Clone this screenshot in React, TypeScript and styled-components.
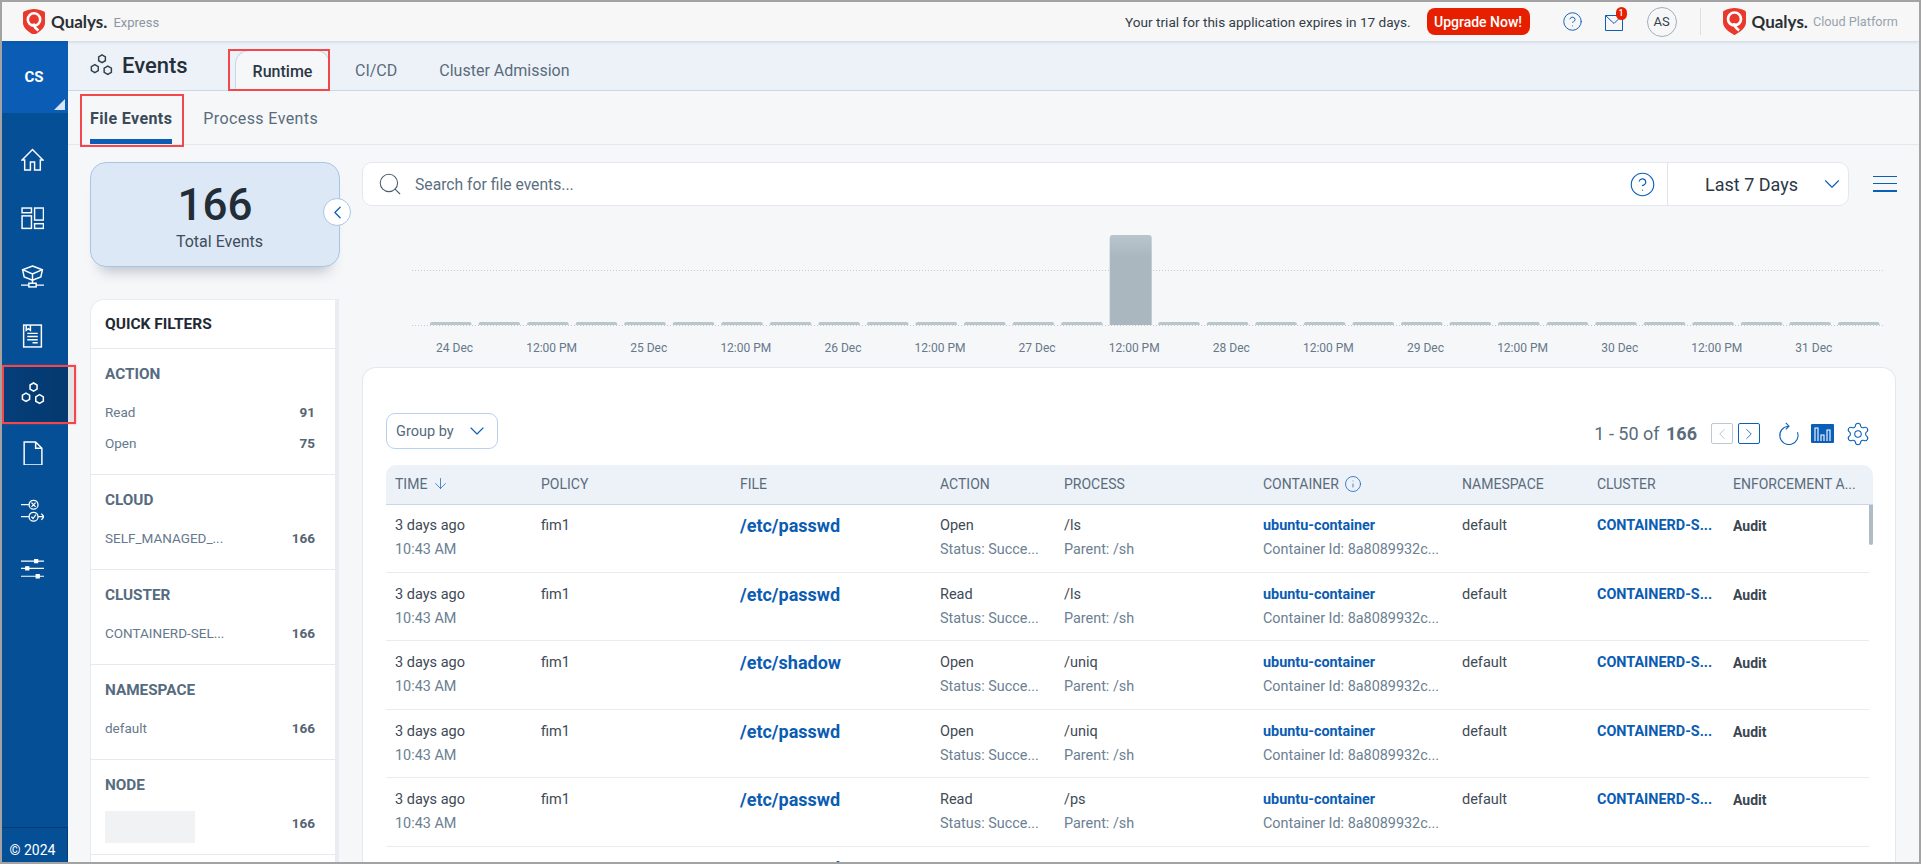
import React from "react";
import styled, { createGlobalStyle } from "styled-components";
import { ChevronDown, ChevronLeft, ChevronRight, CircleHelp, Info, ArrowDown, Search, Settings } from "lucide-react";

const filterGroups = [
  { title: "ACTION", items: [{ label: "Read", count: 91 }, { label: "Open", count: 75 }] },
  { title: "CLOUD", items: [{ label: "SELF_MANAGED_...", count: 166 }] },
  { title: "CLUSTER", items: [{ label: "CONTAINERD-SEL...", count: 166 }] },
  { title: "NAMESPACE", items: [{ label: "default", count: 166 }] },
];

const chartLabels = [
  "24 Dec", "12:00 PM", "25 Dec", "12:00 PM", "26 Dec", "12:00 PM", "27 Dec", "12:00 PM",
  "28 Dec", "12:00 PM", "29 Dec", "12:00 PM", "30 Dec", "12:00 PM", "31 Dec",
];

const rows = [
  { file: "/etc/passwd", action: "Open", process: "/ls" },
  { file: "/etc/passwd", action: "Read", process: "/ls" },
  { file: "/etc/shadow", action: "Open", process: "/uniq" },
  { file: "/etc/passwd", action: "Open", process: "/uniq" },
  { file: "/etc/passwd", action: "Read", process: "/ps" },
  { file: "/etc/passwd", action: "Open", process: "/ps" },
];

const columns = ["POLICY", "FILE", "ACTION", "PROCESS"];

function Shield({ size }: { size: number }) {
  return (
    <svg width={size} height={size * 1.18} viewBox="0 0 22 26">
      <path d="M11 0C14 0 18 1 21 2.6C21.8 3 22 3.6 22 4.4V14C22 19 16 23.6 11 26C6 23.6 0 19 0 14V4.4C0 3.6 .2 3 1 2.6C4 1 8 0 11 0Z" fill="#e8392c" />
      <circle cx="11" cy="10.5" r="6.2" fill="none" stroke="#fff" strokeWidth="2.6" />
      <path d="M10.5 14.5C11 18 13 20 15.5 21.5" fill="none" stroke="#fff" strokeWidth="2.6" />
    </svg>
  );
}

function Hexagons({ color, size }: { color: string; size: number }) {
  const hex = (x: number, y: number, r: number) =>
    [0, 1, 2, 3, 4, 5]
      .map((i) => {
        const a = (Math.PI / 3) * i + Math.PI / 6;
        return `${x + r * Math.cos(a)},${y + r * Math.sin(a)}`;
      })
      .join(" ");
  return (
    <svg width={size} height={size} viewBox="0 0 22 22" fill="none" stroke={color} strokeWidth="1.4">
      <polygon points={hex(11.5, 4.6, 3.7)} />
      <polygon points={hex(4.6, 14, 3.8)} />
      <polygon points={hex(17, 15.6, 4)} />
    </svg>
  );
}

const navIcons = [
  <path key="home" d="M1 11.5L11 1.5L21 11.5H18.5V21H13V13.5H9V21H3.5V11.5Z" />,
  <g key="widgets">
    <rect x="1" y="1" width="9" height="4.5" />
    <rect x="1" y="8.5" width="9" height="12" />
    <rect x="13" y="1" width="8.5" height="11.5" />
    <rect x="13" y="16" width="8.5" height="4.5" />
  </g>,
  <g key="network">
    <path d="M11 1L20.5 4.5L19 11.5L11 14.5L3 11.5L1.5 4.5Z" />
    <path d="M1.5 4.5L11 8.5L20.5 4.5M11 8.5V17.5" />
    <rect x="7.5" y="17.5" width="7" height="3.5" />
    <path d="M0 19.3H7.5M14.5 19.3H22" />
  </g>,
  <g key="doc">
    <rect x="2.5" y="1" width="17" height="21" />
    <path d="M5 1V6L7 4.5L9 6V1" />
    <path d="M6 9H16M6 12H16M6 15H16M11 18H16" />
  </g>,
  <g key="events" />,
  <path key="file" d="M3 1H14L20 7V23H3ZM14 1V7H20" />,
  <g key="route" strokeWidth="1.2">
    <path d="M0 5.5H8M0 17H8M16.500 17H22M19.500 14L22 17L19.500 20" />
    <circle cx="12" cy="5.500" r="4.300" />
    <circle cx="12" cy="17" r="4.300" />
    <path d="M10 3.500L14 7.500M14 3.500L10 7.500M10 17L11.500 18.700L14.300 15" />
  </g>,
  <g key="sliders" strokeWidth="1.1">
    <path d="M0 3H22M0 10H22M0 17.500H22" />
    <path d="M13 1.500H16V4.500H13ZM4.500 8.500H7.500V11.500H4.500ZM14.500 16H17.500V19H14.500Z" fill="#fff" />
  </g>,
];

function App() {
  return (
    <>
      <GlobalStyle />
      <Frame>
        <TopBar>
          <Brand>
            <Shield size={22} />
            <Wordmark>Qualys.</Wordmark>
            <BrandSub>Express</BrandSub>
          </Brand>
          <TopRight>
            <TrialText>Your trial for this application expires in 17 days.</TrialText>
            <UpgradeButton>Upgrade Now!</UpgradeButton>
            <TopHelp>
              <CircleHelp size={21} strokeWidth={1.1} color="#0b5fb8" />
            </TopHelp>
            <MailIcon>
              <svg width="18" height="16" viewBox="0 0 18 16" fill="none" stroke="#0b5fb8" strokeWidth="1">
                <path d="M.5 .5H17.500V15.500H.5ZM.5 .5L9 8.500L13.500 4" />
              </svg>
              <MailBadge>1</MailBadge>
            </MailIcon>
            <Avatar>AS</Avatar>
            <TopDivider />
            <Shield size={23} />
            <Wordmark>Qualys.</Wordmark>
            <CloudSub>Cloud Platform</CloudSub>
          </TopRight>
        </TopBar>
        <Body>
          <Sidebar>
            <OrgBlock>
              CS
              <OrgCorner />
            </OrgBlock>
            <Nav>
              {navIcons.map((icon, i) => (
                <NavItem key={i} $active={i === 4}>
                  {i === 4 ? (
                    <Hexagons color="#fff" size={24} />
                  ) : (
                    <svg width="23" height="24" viewBox="0 0 22 23" fill="none" stroke="#fff" strokeWidth="1.4">
                      {icon}
                    </svg>
                  )}
                  {i === 4 && <SideHighlight />}
                </NavItem>
              ))}
            </Nav>
            <SideFooter>© 2024</SideFooter>
          </Sidebar>
          <Main>
            <TabBar>
              <PageTitle>
                <Hexagons color="#33414e" size={23} />
                <span>Events</span>
              </PageTitle>
              <ActiveTab>
                Runtime
                <TabHighlight />
              </ActiveTab>
              <Tab>CI/CD</Tab>
              <Tab>Cluster Admission</Tab>
            </TabBar>
            <SubTabs>
              <SubTab $active>
                File Events
                <SubTabHighlight />
              </SubTab>
              <SubTab>Process Events</SubTab>
            </SubTabs>
            <Content>
              <LeftColumn>
                <TotalCard>
                  <TotalNumber>166</TotalNumber>
                  <TotalLabel>Total Events</TotalLabel>
                  <CollapseButton>
                    <ChevronLeft size={21} strokeWidth={1.5} color="#0b5fb8" />
                  </CollapseButton>
                </TotalCard>
                <FilterPanel>
                  <FilterHeading>QUICK FILTERS</FilterHeading>
                  {filterGroups.map((group) => (
                    <FilterGroup key={group.title}>
                      <FilterTitle>{group.title}</FilterTitle>
                      {group.items.map((item) => (
                        <FilterItem key={item.label}>
                          <span>{item.label}</span>
                          <FilterCount>{item.count}</FilterCount>
                        </FilterItem>
                      ))}
                    </FilterGroup>
                  ))}
                  <FilterGroup>
                    <FilterTitle>NODE</FilterTitle>
                    <FilterItem>
                      <RedactedName />
                      <FilterCount>166</FilterCount>
                    </FilterItem>
                  </FilterGroup>
                  <ScrollThumb />
                </FilterPanel>
              </LeftColumn>
              <RightColumn>
                <SearchRow>
                  <SearchBox>
                    <SearchField>
                      <Search size={26} strokeWidth={1} color="#4c5f70" />
                      <SearchText>Search for file events...</SearchText>
                      <CircleHelp size={27} strokeWidth={1} color="#0b5fb8" />
                    </SearchField>
                    <DateSelect>
                      <span>Last 7 Days</span>
                      <ChevronDown size={26} strokeWidth={1} color="#0b5fb8" />
                    </DateSelect>
                  </SearchBox>
                  <Hamburger>
                    <i />
                    <i />
                    <i />
                  </Hamburger>
                </SearchRow>
                <Chart>
                  <svg width="1535" height="125" viewBox="0 0 1535 125">
                    <defs>
                      <linearGradient id="tall" x1="0" y1="0" x2="0" y2="1">
                        <stop offset="0" stopColor="#b8c5cd" />
                        <stop offset="0.25" stopColor="#aab7bf" />
                        <stop offset="1" stopColor="#aab7bf" />
                      </linearGradient>
                    </defs>
                    <line x1="50" x2="1522" y1="64.5" y2="64.5" stroke="#c4cad0" strokeDasharray="1 2" />
                    <line x1="50" x2="1522" y1="119.500" y2="119.500" stroke="#c4cad0" strokeDasharray="1 2" />
                    {Array.from({ length: 30 }).map((_, i) =>
                      i === 14 ? (
                        <path key={i} d={`M${68 + i * 48.55} 119V32a3 3 0 0 1 3-3h36a3 3 0 0 1 3 3V119Z`} fill="url(#tall)" />
                      ) : (
                        <path key={i} d={`M${68 + i * 48.55} 119V118a2 2 0 0 1 2-2h37.500a2 2 0 0 1 2 2V119Z`} fill="#b9c7c8" />
                      ),
                    )}
                  </svg>
                  <ChartAxis>
                    {chartLabels.map((label, i) => (
                      <ChartLabel key={i}>{label}</ChartLabel>
                    ))}
                  </ChartAxis>
                </Chart>
                <TableCard>
                  <Toolbar>
                    <GroupBy>
                      Group by
                      <ChevronDown size={24} strokeWidth={1.1} color="#0b5fb8" />
                    </GroupBy>
                    <Pagination>
                      <PageInfo>
                        1 - 50 of <b>166</b>
                      </PageInfo>
                      <PageButton $disabled>
                        <ChevronLeft size={18} strokeWidth={1} color="#a8b4bd" />
                      </PageButton>
                      <PageButton>
                        <ChevronRight size={18} strokeWidth={1.1} color="#0b5fb8" />
                      </PageButton>
                      <RefreshIcon viewBox="0 0 24 26" fill="none" stroke="#0b5fb8" strokeWidth="1.2">
                        <path d="M21.3 11.500A10 10 0 1 1 11 5.050" />
                        <path d="M8.500 1.500L12 5L8.500 8.500" />
                      </RefreshIcon>
                      <ChartToggle>
                        <svg width="17" height="14" viewBox="0 0 17 14" fill="none" stroke="#fff" strokeWidth="1.1">
                          <path d="M1 14V1H4V14M7 14V8H10V14M13 14V3H16V14" />
                        </svg>
                      </ChartToggle>
                      <Settings size={26} strokeWidth={1} color="#0b5fb8" />
                    </Pagination>
                  </Toolbar>
                  <TableHead>
                    <HeadCell>
                      TIME <ArrowDown size={17} strokeWidth={1} color="#0b5fb8" />
                    </HeadCell>
                    {columns.map((c) => (
                      <HeadCell key={c}>{c}</HeadCell>
                    ))}
                    <HeadCell>
                      CONTAINER <Info size={18} strokeWidth={1} color="#0b5fb8" />
                    </HeadCell>
                    <HeadCell>NAMESPACE</HeadCell>
                    <HeadCell>CLUSTER</HeadCell>
                    <HeadCell>ENFORCEMENT A...</HeadCell>
                  </TableHead>
                  <TableBody>
                    {rows.map((row, i) => (
                      <Row key={i}>
                        <Cell>
                          <Primary>3 days ago</Primary>
                          <Secondary>10:43 AM</Secondary>
                        </Cell>
                        <Cell>
                          <Primary>fim1</Primary>
                        </Cell>
                        <Cell>
                          <FileLink>{row.file}</FileLink>
                        </Cell>
                        <Cell>
                          <Primary>{row.action}</Primary>
                          <Secondary>Status: Succe...</Secondary>
                        </Cell>
                        <Cell>
                          <Primary>{row.process}</Primary>
                          <Secondary>Parent: /sh</Secondary>
                        </Cell>
                        <Cell>
                          <BlueStrong>ubuntu-container</BlueStrong>
                          <Secondary>Container Id: 8a8089932c...</Secondary>
                        </Cell>
                        <Cell>
                          <Primary>default</Primary>
                        </Cell>
                        <Cell>
                          <BlueStrong>CONTAINERD-S...</BlueStrong>
                        </Cell>
                        <Cell>
                          <AuditText>Audit</AuditText>
                        </Cell>
                      </Row>
                    ))}
                    <TableThumb />
                  </TableBody>
                </TableCard>
              </RightColumn>
            </Content>
          </Main>
        </Body>
      </Frame>
    </>
  );
}

const GlobalStyle = createGlobalStyle`
  html, body {
    margin: 0;
    padding: 0;
    background: #fff;
    font-family: Roboto, "Liberation Sans", sans-serif;
  }
  * {
    box-sizing: border-box;
  }
`;

const Frame = styled.div`
  width: 1921px;
  height: 864px;
  border: 2px solid #a3a3a3;
  display: flex;
  flex-direction: column;
  overflow: hidden;
  background: #f6f7f9;
`;

const TopBar = styled.header`
  height: 39px;
  flex: none;
  display: flex;
  align-items: center;
  justify-content: space-between;
  padding: 0 21px;
  background: #f7f7f7;
  box-shadow: 0 1px 3px rgba(40, 70, 110, 0.18);
  position: relative;
  z-index: 3;
`;

const Brand = styled.div`
  display: flex;
  align-items: center;
`;

const Wordmark = styled.span`
  margin-left: 6px;
  font-family: Lato, sans-serif;
  font-weight: 700;
  font-size: 17px;
  color: #2b2f33;
`;

const BrandSub = styled.span`
  margin-left: 6px;
  font-size: 13px;
  color: #8b96a3;
  padding-top: 2px;
`;

const TopRight = styled.div`
  display: flex;
  align-items: center;
`;

const TrialText = styled.span`
  font-size: 13.6px;
  color: #333d47;
`;

const UpgradeButton = styled.button`
  margin-left: 16px;
  width: 103px;
  height: 27px;
  border: none;
  border-radius: 8px;
  background: #e61f00;
  color: #fff;
  font: 500 14px Roboto, sans-serif;
`;

const TopHelp = styled.span`
  display: flex;
  margin-left: 32px;
`;

const MailIcon = styled.span`
  display: flex;
  position: relative;
  margin-left: 22px;
  margin-top: 3px;
`;

const MailBadge = styled.span`
  position: absolute;
  right: -4px;
  top: -8px;
  width: 11px;
  height: 13px;
  border-radius: 6px;
  background: #e61f00;
  color: #fff;
  font-size: 9px;
  font-weight: 500;
  line-height: 13px;
  text-align: center;
`;

const Avatar = styled.span`
  margin-left: 24px;
  width: 30px;
  height: 30px;
  border-radius: 50%;
  border: 1px solid #9fb0c0;
  display: flex;
  align-items: center;
  justify-content: center;
  font-size: 13px;
  color: #33414e;
`;

const TopDivider = styled.span`
  margin: 0 22px 0 23px;
  width: 1px;
  height: 27px;
  background: #dcdfe3;
`;

const CloudSub = styled.span`
  margin-left: 5px;
  font-size: 12.7px;
  color: #98a3ad;
`;

const Body = styled.div`
  flex: 1;
  min-height: 0;
  display: flex;
`;

const Sidebar = styled.aside`
  width: 66px;
  flex: none;
  display: flex;
  flex-direction: column;
  background: #054f96;
  position: relative;
  z-index: 2;
`;

const OrgBlock = styled.div`
  height: 72px;
  flex: none;
  position: relative;
  display: flex;
  align-items: center;
  justify-content: center;
  background: #0a5cb5;
  color: #fff;
  font-size: 15px;
  font-weight: 700;
  padding-right: 2px;
`;

const OrgCorner = styled.span`
  position: absolute;
  right: 3px;
  bottom: 3px;
  width: 0;
  height: 0;
  border-left: 11px solid transparent;
  border-bottom: 11px solid #d6e4f3;
`;

const Nav = styled.nav`
  padding-top: 18px;
  display: flex;
  flex-direction: column;
`;

const NavItem = styled.div<{ $active?: boolean }>`
  height: 58.5px;
  position: relative;
  display: flex;
  align-items: center;
  justify-content: center;
  padding-right: 5px;
  background: ${(p) => (p.$active ? "linear-gradient(90deg, #053e7a, #05396f)" : "transparent")};
`;

const SideHighlight = styled.span`
  position: absolute;
  inset: 0 -8px 0 0;
  border: 2px solid #f2484c;
  box-shadow: 0 0 2px rgba(242, 72, 76, 0.4);
  background: linear-gradient(90deg, transparent 64px, rgba(0, 0, 0, 0.08) 64px);
`;

const SideFooter = styled.footer`
  margin-top: auto;
  height: 35px;
  border-top: 1px solid #053c75;
  border-right: 1px solid #053c75;
  display: flex;
  align-items: center;
  justify-content: center;
  padding: 9px 4px 0 0;
  color: #fff;
  font-size: 14px;
`;

const Main = styled.main`
  flex: 1;
  min-width: 0;
  display: flex;
  flex-direction: column;
`;

const TabBar = styled.div`
  height: 50px;
  flex: none;
  display: flex;
  align-items: flex-end;
  padding-left: 22px;
  background: #edf2f9;
  border-bottom: 1px solid #c9d8e8;
`;

const PageTitle = styled.div`
  width: 145px;
  height: 100%;
  display: flex;
  align-items: center;
  gap: 9px;
  font-size: 22px;
  font-weight: 500;
  color: #25303a;
`;

const ActiveTab = styled.div`
  position: relative;
  height: 41px;
  width: 95px;
  margin-bottom: -1px;
  display: flex;
  align-items: center;
  justify-content: center;
  background: #f6f7f9;
  border: 1px solid #c9d8e8;
  border-bottom: none;
  border-radius: 14px 14px 0 0;
  font-size: 16px;
  font-weight: 500;
  color: #2c3844;
`;

const TabHighlight = styled.span`
  position: absolute;
  inset: -2px -1px 0 -8px;
  border: 2px solid #f2484c;
`;

const Tab = styled.div`
  height: 40px;
  padding: 0 17px 0 25px;
  display: flex;
  align-items: center;
  font-size: 16px;
  color: #5a6c7c;
`;

const SubTabs = styled.div`
  height: 54px;
  flex: none;
  display: flex;
  gap: 31px;
  padding-left: 22px;
  border-bottom: 1px solid #e4e8ec;
`;

const SubTab = styled.div<{ $active?: boolean }>`
  position: relative;
  height: 53px;
  padding-top: 18px;
  font-size: 16px;
  letter-spacing: 0.4px;
  line-height: 20px;
  font-weight: ${(p) => (p.$active ? 700 : 400)};
  color: ${(p) => (p.$active ? "#3a4a59" : "#5a6c7c")};
  border-bottom: 5px solid ${(p) => (p.$active ? "#0a5cb5" : "transparent")};
`;

const SubTabHighlight = styled.span`
  position: absolute;
  inset: 3px -12px -8px -10px;
  border: 2px solid #f2484c;
`;

const Content = styled.div`
  flex: 1;
  min-height: 0;
  display: flex;
  gap: 22px;
  padding: 17px 22px 0;
`;

const LeftColumn = styled.div`
  width: 250px;
  flex: none;
  display: flex;
  flex-direction: column;
`;

const TotalCard = styled.div`
  height: 105px;
  flex: none;
  position: relative;
  display: flex;
  flex-direction: column;
  align-items: center;
  border: 1px solid #a9c5e4;
  border-radius: 16px;
  background: #dce8f5;
  box-shadow: 0 14px 14px -10px rgba(30, 50, 70, 0.28);
`;

const TotalNumber = styled.div`
  margin-top: 16px;
  font-size: 44px;
  line-height: 52px;
  font-weight: 500;
  color: #232d37;
`;

const TotalLabel = styled.div`
  margin: 1px 0 0 9px;
  font-size: 16px;
  line-height: 20px;
  color: #3f4d5b;
`;

const CollapseButton = styled.span`
  position: absolute;
  right: -12px;
  top: 35px;
  width: 28px;
  height: 28px;
  display: flex;
  align-items: center;
  justify-content: center;
  border-radius: 50%;
  background: #fff;
  border: 1px solid #a9c5e4;
`;

const FilterPanel = styled.div`
  margin-top: 32px;
  flex: 1;
  min-height: 0;
  width: 249px;
  position: relative;
  overflow: hidden;
  background: #fff;
  border-left: 1px solid #e6eaee;
  border-right: 4px solid #e9edf1;
  border-top: 1px solid #e9edf1;
  border-top-left-radius: 14px;
`;

const ScrollThumb = styled.span`
  position: absolute;
  right: -4px;
  top: 0;
  width: 4px;
  height: 404px;
  background: #afbcc6;
  border-top-right-radius: 2px;
`;

const FilterHeading = styled.div`
  height: 49px;
  display: flex;
  align-items: center;
  padding-left: 14px;
  padding-bottom: 1px;
  border-bottom: 1px solid #e6eaee;
  font-size: 15.5px;
  font-weight: 700;
  color: #1f2a35;
`;

const FilterGroup = styled.section`
  padding: 16px 20px 16px 14px;
  border-bottom: 1px solid #e6eaee;
`;

const FilterTitle = styled.div`
  margin-bottom: 13px;
  font-size: 15.3px;
  line-height: 18px;
  font-weight: 700;
  color: #566b80;
`;

const FilterItem = styled.div`
  height: 31px;
  display: flex;
  align-items: center;
  justify-content: space-between;
  font-size: 13.5px;
  color: #65798c;
`;

const FilterCount = styled.b`
  font-size: 13.5px;
  font-weight: 700;
  color: #566474;
`;

const RedactedName = styled.span`
  width: 90px;
  height: 32px;
  margin: 4px 0 -5px;
  background: #f1f2f4;
`;

const RightColumn = styled.div`
  flex: 1;
  min-width: 0;
  display: flex;
  flex-direction: column;
`;

const SearchRow = styled.div`
  height: 44px;
  flex: none;
  display: flex;
  align-items: center;
  gap: 24px;
`;

const SearchBox = styled.div`
  flex: 1;
  height: 100%;
  display: flex;
  background: #fff;
  border: 1px solid #e4e8ee;
  border-radius: 10px;
`;

const SearchField = styled.div`
  flex: 1;
  display: flex;
  align-items: center;
  padding: 0 11px 0 14px;
`;

const SearchText = styled.span`
  flex: 1;
  margin-left: 12px;
  font-size: 15.7px;
  color: #5c6f80;
`;

const DateSelect = styled.div`
  width: 181px;
  flex: none;
  display: flex;
  align-items: center;
  justify-content: space-between;
  padding: 0 3px 0 37px;
  border-left: 1px solid #e0e5ea;
  font-size: 18px;
  color: #2c3844;
`;

const Hamburger = styled.div`
  width: 24px;
  display: flex;
  flex-direction: column;
  gap: 6px;
  i {
    display: block;
    height: 1px;
    background: #0b5fb8;
  }
  i:last-child {
    height: 2px;
  }
`;

const Chart = styled.div`
  height: 161px;
  flex: none;
  svg {
    display: block;
  }
`;

const ChartAxis = styled.div`
  height: 34px;
  display: flex;
  padding-left: 44px;
`;

const ChartLabel = styled.span`
  width: 97.1px;
  flex: none;
  text-align: center;
  font-size: 12px;
  line-height: 34px;
  color: #66788a;
`;

const TableCard = styled.div`
  flex: 1;
  min-height: 0;
  margin-right: 1px;
  padding: 45px 22px 0 23px;
  overflow: hidden;
  background: #fff;
  border: 1px solid #e4e8ee;
  border-bottom: none;
  border-radius: 14px 14px 0 0;
`;

const Toolbar = styled.div`
  height: 36px;
  display: flex;
  align-items: center;
  justify-content: space-between;
`;

const GroupBy = styled.div`
  width: 112px;
  height: 36px;
  display: flex;
  align-items: center;
  justify-content: space-between;
  padding: 0 8px 0 9px;
  border: 1px solid #b8d2ee;
  border-radius: 9px;
  font-size: 14.5px;
  color: #546a7e;
`;

const Pagination = styled.div`
  display: flex;
  align-items: center;
  padding: 5px 2px 0 0;
`;

const PageInfo = styled.span`
  font-size: 18px;
  color: #5a6c7c;
  margin-right: 14px;
  b {
    font-weight: 700;
    margin-left: 2px;
  }
`;

const PageButton = styled.span<{ $disabled?: boolean }>`
  width: 22px;
  height: 21px;
  margin-right: 5px;
  display: flex;
  align-items: center;
  justify-content: center;
  border: 1px solid ${(p) => (p.$disabled ? "#bcc8d2" : "#0b5fb8")};
  border-radius: 2px;
`;

const RefreshIcon = styled.svg`
  width: 22px;
  height: 25px;
  margin: 0 11px 0 13px;
`;

const ChartToggle = styled.span`
  width: 23px;
  height: 19px;
  margin-right: 11px;
  display: flex;
  align-items: flex-end;
  justify-content: center;
  padding-bottom: 2px;
  background: #0b5fb8;
  border-radius: 1px;
`;

const gridColumns = "155px 199px 200px 124px 199px 199px 135px 136px minmax(0, 1fr)";

const TableHead = styled.div`
  margin-top: 16px;
  height: 40px;
  display: grid;
  grid-template-columns: ${gridColumns};
  background: #edf2f9;
  border-bottom: 1px solid #c9d6e4;
  border-radius: 10px 10px 0 0;
`;

const HeadCell = styled.div`
  display: flex;
  align-items: center;
  gap: 5px;
  padding-bottom: 2px;
  font-size: 14px;
  color: #5a6c7c;
  &:first-child {
    padding-left: 9px;
  }
`;

const TableBody = styled.div`
  position: relative;
  margin-top: -1px;
  padding-right: 4px;
`;

const TableThumb = styled.span`
  position: absolute;
  top: 1px;
  right: 0;
  width: 4px;
  height: 40px;
  background: #afbcc6;
  border-radius: 0 0 2px 2px;
`;

const Row = styled.div`
  height: 68.5px;
  display: grid;
  grid-template-columns: ${gridColumns};
  padding-top: 10px;
  border-bottom: 1px solid #e8ecef;
`;

const Cell = styled.div`
  min-width: 0;
  &:first-child {
    padding-left: 9px;
  }
`;

const Primary = styled.div`
  font-size: 14.5px;
  line-height: 24px;
  color: #3e4a55;
`;

const Secondary = styled.div`
  font-size: 14.4px;
  line-height: 24px;
  color: #6b8092;
`;

const FileLink = styled.div`
  font-size: 18px;
  line-height: 24px;
  font-weight: 700;
  color: #0b5cb3;
`;

const BlueStrong = styled.div`
  font-size: 14.4px;
  line-height: 24px;
  font-weight: 700;
  color: #0b5cb3;
`;

const AuditText = styled.div`
  font-size: 14px;
  line-height: 24px;
  font-weight: 700;
  color: #3a4550;
`;

export default App;
